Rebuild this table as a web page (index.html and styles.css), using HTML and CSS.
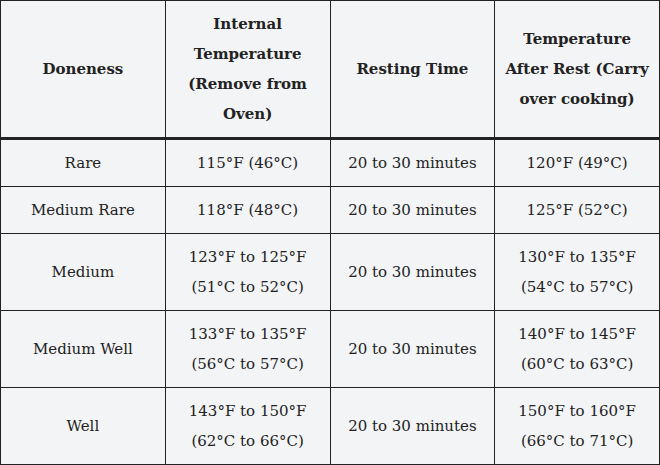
FILE: index.html
```html
<!DOCTYPE html>
<html>
<head>
<meta charset="utf-8">
<link rel="stylesheet" href="styles.css">
</head>
<body>
<table class="temps">
  <thead>
    <tr>
      <th>Doneness</th>
      <th>Internal Temperature (Remove from Oven)</th>
      <th>Resting Time</th>
      <th>Temperature After Rest (Carry over cooking)</th>
    </tr>
  </thead>
  <tbody>
    <tr><td>Rare</td><td>115°F (46°C)</td><td>20 to 30 minutes</td><td>120°F (49°C)</td></tr>
    <tr><td>Medium Rare</td><td>118°F (48°C)</td><td>20 to 30 minutes</td><td>125°F (52°C)</td></tr>
    <tr><td>Medium</td><td>123°F to 125°F (51°C to 52°C)</td><td>20 to 30 minutes</td><td>130°F to 135°F (54°C to 57°C)</td></tr>
    <tr><td>Medium Well</td><td>133°F to 135°F (56°C to 57°C)</td><td>20 to 30 minutes</td><td>140°F to 145°F (60°C to 63°C)</td></tr>
    <tr><td>Well</td><td>143°F to 150°F (62°C to 66°C)</td><td>20 to 30 minutes</td><td>150°F to 160°F (66°C to 71°C)</td></tr>
  </tbody>
</table>
</body>
</html>
```
FILE: styles.css
```css
html, body {
  margin: 0;
  padding: 0;
  background: #f3f4f6;
}
.temps {
  width: 660px;
  border-collapse: collapse;
  table-layout: fixed;
  font-family: "DejaVu Serif", "Liberation Serif", serif;
  font-size: 15px;
  line-height: 30px;
  color: #222;
  background: #f3f4f6;
}
.temps th,
.temps td {
  border: 1px solid #222;
  padding: 8px 12px;
  text-align: center;
  vertical-align: middle;
}
.temps th {
  font-weight: bold;
  padding: 8px 8px;
  border-bottom: 3px solid #222;
}
```
